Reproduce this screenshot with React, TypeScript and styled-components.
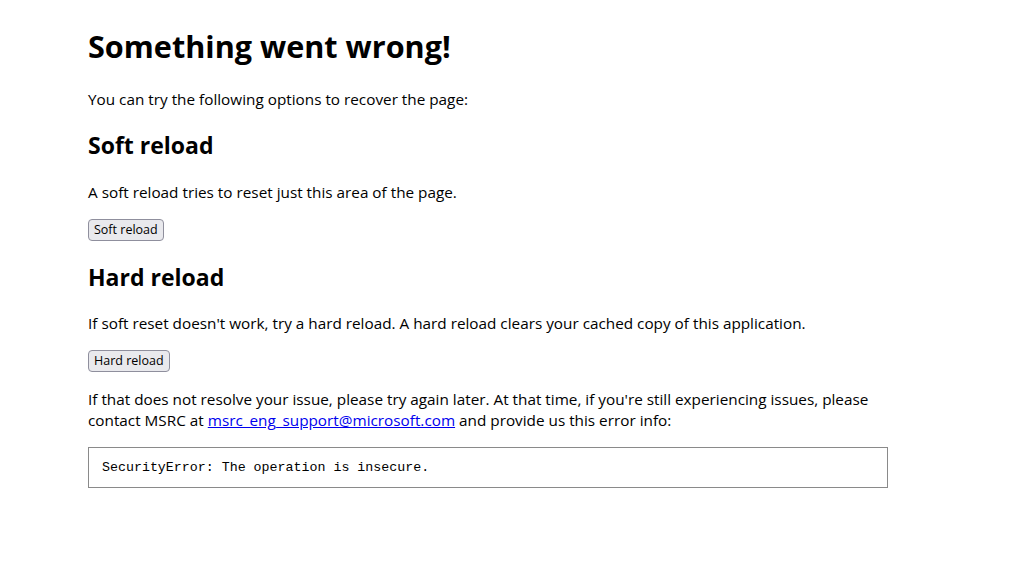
import React from "react";
import styled, { createGlobalStyle } from "styled-components";

const GlobalStyle = createGlobalStyle`
  html, body { background: #ffffff; }
  body {
    margin: 8px;
    font-family: "Open Sans", "Noto Sans", sans-serif;
    font-size: 15.3px;
    line-height: 21.3px;
    color: #000000;
  }
`;

const Page = styled.main`
  max-width: 800px;
  margin-left: 80px;
`;

const Title = styled.h1`
  font-size: 30.6px;
  font-weight: 700;
  line-height: 42.5px;
  margin: 17.4px 0 21.4px;
`;

const ButtonRow = styled.div`
  display: flex;
  margin: -1px 0 0;
`;

const Heading = styled.h2`
  font-size: 23px;
  font-weight: 700;
  line-height: 31.9px;
  margin: 19.9px 0;

  ${ButtonRow} + & {
    margin-top: 21px;
  }
`;

const Text = styled.p`
  margin: 16px 0;

  ${ButtonRow} + & {
    margin-top: 17px;
  }
`;

const ReloadButton = styled.button`
  font-family: "Open Sans", "Noto Sans", sans-serif;
  font-size: 12.5px;
  line-height: 17px;
  color: #000000;
  background: #e9e9ed;
  border: 1px solid #8f8f9d;
  border-radius: 4px;
  padding: 1px 5px 2px;
  cursor: pointer;
`;

const MailLink = styled.a`
  color: #0000ee;
  text-decoration: underline;
`;

const ErrorBox = styled.div`
  margin: 13px 0 16px;
  border: 1px solid #8a8a8a;
  padding: 12px 12px 12px 13px;
  font-family: "Liberation Mono", "Courier New", monospace;
  font-size: 13.3px;
  line-height: 15px;
  white-space: pre-wrap;
`;

export default function App() {
  return (
    <>
      <GlobalStyle />
      <Page>
        <Title>Something went wrong!</Title>
        <Text>You can try the following options to recover the page:</Text>
        <Heading>Soft reload</Heading>
        <Text>A soft reload tries to reset just this area of the page.</Text>
        <ButtonRow>
          <ReloadButton type="button">Soft reload</ReloadButton>
        </ButtonRow>
        <Heading>Hard reload</Heading>
        <Text>
          If soft reset doesn't work, try a hard reload. A hard reload clears your cached copy of this
          application.
        </Text>
        <ButtonRow>
          <ReloadButton type="button">Hard reload</ReloadButton>
        </ButtonRow>
        <Text>
          If that does not resolve your issue, please try again later. At that time, if you're still
          experiencing issues, please contact MSRC at{" "}
          <MailLink href="mailto:msrc_eng_support@microsoft.com">msrc_eng_support@microsoft.com</MailLink>{" "}
          and provide us this error info:
        </Text>
        <ErrorBox>SecurityError: The operation is insecure.</ErrorBox>
      </Page>
    </>
  );
}
